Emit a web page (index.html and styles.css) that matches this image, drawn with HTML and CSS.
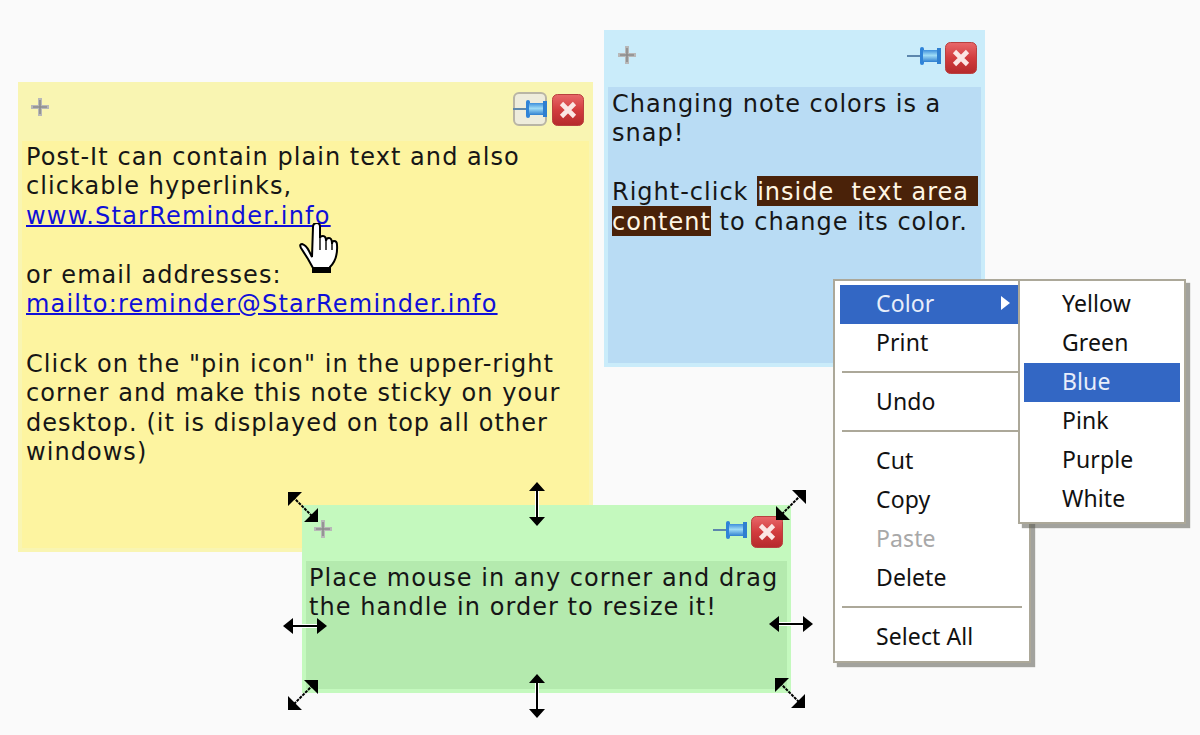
FILE: index.html
```html
<!DOCTYPE html>
<html lang="en">
<head>
<meta charset="utf-8">
<title>Post-It notes</title>
<link rel="stylesheet" href="styles.css">
</head>
<body>
<svg class="defs" width="0" height="0" aria-hidden="true">
  <defs>
    <linearGradient id="redg" x1="0" y1="0" x2="0" y2="1">
      <stop offset="0" stop-color="#e8686a"/><stop offset=".5" stop-color="#d23c3e"/><stop offset="1" stop-color="#b52a2c"/>
    </linearGradient>
    <linearGradient id="blueg" x1="0" y1="0" x2="0" y2="1">
      <stop offset="0" stop-color="#3d8fdc"/><stop offset=".45" stop-color="#9fdcf6"/><stop offset="1" stop-color="#2f7fd0"/>
    </linearGradient>
    <symbol id="move" viewBox="0 0 20 20">
      <path d="M10 1v18M1 10h18" stroke="#b8b8b8" stroke-width="4" fill="none"/>
      <path d="M10 3v14M3 10h14" stroke="#8c8c8c" stroke-width="1.6" fill="none"/>
    </symbol>
    <symbol id="pin" viewBox="0 0 36 20">
      <path d="M0 10h14" stroke="#5d87ad" stroke-width="2"/>
      <rect x="13" y="1" width="4" height="18" rx="2" fill="#2f83d8"/>
      <rect x="16" y="4" width="15" height="12" fill="url(#blueg)"/>
      <rect x="30" y="2" width="4" height="16" fill="#2f7fd0"/>
    </symbol>
    <symbol id="close" viewBox="0 0 32 32">
      <rect x=".5" y=".5" width="31" height="31" rx="5" fill="url(#redg)" stroke="#b9403f"/>
      <path d="M9.5 9.5l13 13M22.5 9.5l-13 13" stroke="#fbe6e4" stroke-width="4.6"/>
    </symbol>
    <symbol id="arrow-v" viewBox="0 0 18 44">
      <path d="M9 6v32" stroke="#fff" stroke-width="4"/>
      <path d="M9 3v38" stroke="#000" stroke-width="2"/>
      <path d="M9 0l8 9H1zM9 44l8-9H1z" fill="#000"/>
    </symbol>
    <symbol id="arrow-h" viewBox="0 0 44 18">
      <path d="M6 9h32" stroke="#fff" stroke-width="4"/>
      <path d="M3 9h38" stroke="#000" stroke-width="2"/>
      <path d="M0 9l10-8v16zM44 9l-10-8v16z" fill="#000"/>
    </symbol>
    <symbol id="arrow-d" viewBox="0 0 30 30">
      <path d="M5 5l20 20" stroke="#000" stroke-width="2" stroke-dasharray="3 1"/>
      <path d="M0 0h14L0 14zM30 30H16l14-14z" fill="#000"/>
    </symbol>
    <symbol id="arrow-a" viewBox="0 0 30 30">
      <path d="M25 5L5 25" stroke="#000" stroke-width="2" stroke-dasharray="3 1"/>
      <path d="M30 0H16l14 14zM0 30h14L0 16z" fill="#000"/>
    </symbol>
  </defs>
</svg>

<section class="note note-yellow">
  <header class="note-head">
    <svg class="ic-move"><use href="#move"/></svg>
    <div class="note-tools">
      <span class="pin-btn"><svg class="ic-pin"><use href="#pin"/></svg></span>
      <svg class="ic-close"><use href="#close"/></svg>
    </div>
  </header>
  <div class="note-text">Post-It can contain plain text and also<br>clickable hyperlinks,<br><a href="#">www.StarReminder.info</a><br><br>or email addresses:<br><a href="#">mailto:reminder@StarReminder.info</a><br><br>Click on the "pin icon" in the upper-right<br>corner and make this note sticky on your<br>desktop. (it is displayed on top all other<br>windows)</div>
</section>

<section class="note note-blue">
  <header class="note-head">
    <svg class="ic-move"><use href="#move"/></svg>
    <div class="note-tools">
      <svg class="ic-pin"><use href="#pin"/></svg>
      <svg class="ic-close"><use href="#close"/></svg>
    </div>
  </header>
  <div class="note-text">Changing note colors is a<br>snap!<br><br>Right-click <mark>inside&nbsp; text area&nbsp;</mark><br><mark>content</mark> to change its color.</div>
</section>

<section class="note note-green">
  <header class="note-head">
    <svg class="ic-move"><use href="#move"/></svg>
    <div class="note-tools">
      <svg class="ic-pin"><use href="#pin"/></svg>
      <svg class="ic-close"><use href="#close"/></svg>
    </div>
  </header>
  <div class="note-text">Place mouse in any corner and drag<br>the handle in order to resize it!</div>
</section>

<svg class="handle h-n"><use href="#arrow-v"/></svg>
<svg class="handle h-s"><use href="#arrow-v"/></svg>
<svg class="handle h-w"><use href="#arrow-h"/></svg>
<svg class="handle h-e"><use href="#arrow-h"/></svg>
<svg class="handle h-nw"><use href="#arrow-d"/></svg>
<svg class="handle h-se"><use href="#arrow-d"/></svg>
<svg class="handle h-ne"><use href="#arrow-a"/></svg>
<svg class="handle h-sw"><use href="#arrow-a"/></svg>

<svg class="hand" viewBox="0 0 40 52">
  <path d="M13 34L10 28Q7 22 3 21Q0 21 2 25L9 36L14 45V49H31V44Q39 36 38 22Q38 18 35 18Q33 18 33 21Q33 15 30 15Q27 15 27 18Q27 13 24 13Q21 13 21 15V4Q21 0 18 0Q14 0 14 4Z" fill="#fff" stroke="#000" stroke-width="2"/>
  <path d="M21 15v12M27 18v9M33 21v6" stroke="#000" stroke-width="1.4" fill="none"/>
  <rect x="13" y="44" width="19" height="6" fill="#000"/>
</svg>

<nav class="menu">
  <div class="menu-item is-active"><span>Color</span><i class="caret"></i></div>
  <div class="menu-item">Print</div>
  <div class="menu-sep"></div>
  <div class="menu-item">Undo</div>
  <div class="menu-sep"></div>
  <div class="menu-item">Cut</div>
  <div class="menu-item">Copy</div>
  <div class="menu-item is-disabled">Paste</div>
  <div class="menu-item">Delete</div>
  <div class="menu-sep"></div>
  <div class="menu-item">Select All</div>
</nav>

<nav class="menu submenu">
  <div class="menu-item">Yellow</div>
  <div class="menu-item">Green</div>
  <div class="menu-item is-active">Blue</div>
  <div class="menu-item">Pink</div>
  <div class="menu-item">Purple</div>
  <div class="menu-item">White</div>
</nav>
</body>
</html>
```
FILE: styles.css
```css
html, body {
  margin: 0;
  height: 100%;
  overflow: hidden;
  background: #fafafa;
}
.defs { position: absolute; }

.note {
  position: absolute;
  box-sizing: border-box;
  padding: 0 4px 4px;
  display: flex;
  flex-direction: column;
}
.note-yellow { left: 18px; top: 82px; width: 575px; height: 470px; background: #f9f5b2; }
.note-blue { left: 604px; top: 30px; width: 381px; height: 337px; background: #caecfa; }
.note-green { left: 302px; top: 505px; width: 489px; height: 188px; background: #c4f9be; }

.note-head {
  box-sizing: border-box;
  height: 57px;
  flex: none;
  display: flex;
  justify-content: space-between;
  align-items: flex-start;
  padding: 12px 4px 0 9px;
}
.note-yellow .note-head { height: 59px; padding: 9px 5px 0 8px; }
.note-green .note-head { height: 56px; padding: 11px 4px 0 7px; }

.ic-move { width: 20px; height: 20px; margin-top: 3px; }
.note-yellow .ic-move { margin-top: 6px; }
.note-tools { display: flex; align-items: center; gap: 2px; }
.ic-pin { width: 36px; height: 20px; display: block; margin-bottom: 5px; }
.ic-close { width: 32px; height: 32px; display: block; }
.note-yellow .ic-close { margin-top: 3px; }
.pin-btn {
  box-sizing: border-box;
  width: 34px;
  height: 34px;
  margin-right: 3px;
  border: 2px solid #b9b5a5;
  border-radius: 6px;
  background: #eeecdc;
  display: flex;
  align-items: center;
}
.pin-btn .ic-pin { flex: none; margin: 0 0 0 -2px; }

.note-text {
  flex: 1;
  padding: 2.5px 3px 0 4px;
  font-family: "DejaVu Sans", sans-serif;
  font-size: 24px;
  letter-spacing: 1.05px;
  line-height: 29.6px;
  color: #161616;
  white-space: nowrap;
  overflow: hidden;
}
.note-yellow .note-text { background: #fdf4a0; padding-top: 1.5px; }
.note-blue .note-text { background: #b9dcf4; letter-spacing: 1px; }
.note-green .note-text { background: #b4eaae; padding-top: 3px; padding-left: 3px; line-height: 29px; }
.note-text a { color: #1010d8; letter-spacing: 1.2px; text-decoration: underline; text-decoration-thickness: 2px; }
.note-text mark { background: #4a2209; color: #fff6e4; padding-top: 2px; }

.handle { position: absolute; overflow: visible; }
.h-n, .h-s { width: 18px; height: 44px; left: 528px; }
.h-n { top: 482px; }
.h-s { top: 674px; }
.h-w, .h-e { width: 44px; height: 18px; }
.h-w { left: 283px; top: 617px; }
.h-e { left: 769px; top: 615px; }
.h-nw, .h-se, .h-ne, .h-sw { width: 30px; height: 30px; }
.h-nw { left: 288px; top: 492px; }
.h-se { left: 775px; top: 678px; }
.h-ne { left: 776px; top: 490px; }
.h-sw { left: 288px; top: 680px; }

.hand { position: absolute; left: 299px; top: 223px; width: 40px; height: 52px; }

.menu {
  position: absolute;
  left: 833px;
  top: 279px;
  width: 198px;
  height: 384px;
  box-sizing: border-box;
  padding: 4px 5px;
  background: #fff;
  border: 2px solid #aca899;
  box-shadow: 4px 4px 1px rgba(90, 90, 80, .55);
  font-family: "Noto Sans", sans-serif;
  font-size: 23px;
  letter-spacing: .1px;
  color: #111;
}
.submenu {
  left: 1018px;
  width: 168px;
  height: 245px;
  padding: 4px;
}
.menu-item {
  box-sizing: border-box;
  height: 39px;
  line-height: 36px;
  padding: 0 0 3px 36px;
  display: flex;
  justify-content: space-between;
  align-items: center;
}
.submenu .menu-item { padding-left: 38px; }
.menu-item.is-active { background: #3367c4; color: #e8eefa; }
.menu-item.is-disabled { color: #a8a8a8; }
.menu-sep {
  height: 2px;
  margin: 7.5px 2px 10.5px;
  background: #aca899;
}
.caret {
  width: 0;
  height: 0;
  border-left: 9px solid #fff;
  border-top: 7px solid transparent;
  border-bottom: 7px solid transparent;
  margin-right: 14px;
}
```
